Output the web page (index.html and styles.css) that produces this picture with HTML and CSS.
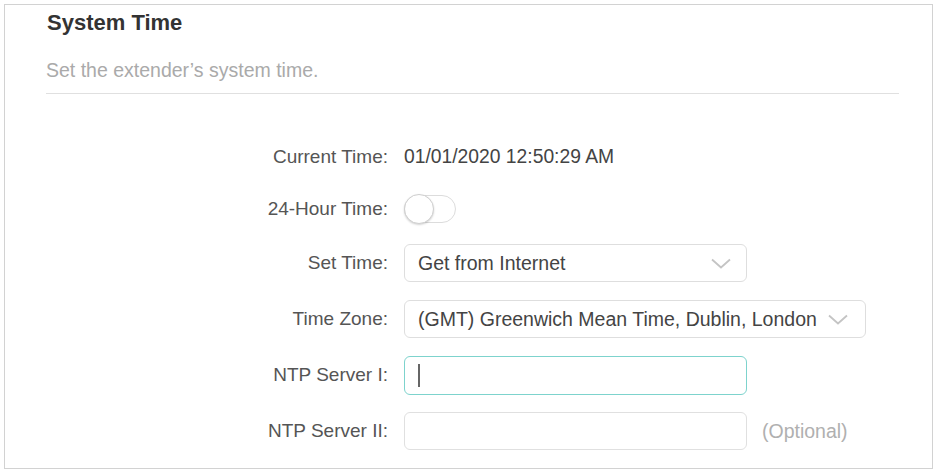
FILE: index.html
```html
<!DOCTYPE html>
<html lang="en">
<head>
<meta charset="utf-8">
<title>System Time</title>
<link rel="stylesheet" href="styles.css">
</head>
<body>
<section class="card">
  <header class="card-head">
    <h1 class="title">System Time</h1>
    <p class="subtitle">Set the extender’s system time.</p>
  </header>
  <div class="form">
    <div class="label row-short">Current Time:</div>
    <div class="field row-short"><span class="value">01/01/2020 12:50:29 AM</span></div>

    <div class="label row-short">24-Hour Time:</div>
    <div class="field row-short"><span class="toggle"><span class="knob"></span></span></div>

    <div class="label">Set Time:</div>
    <div class="field">
      <div class="select select-narrow">
        <span class="select-text">Get from Internet</span>
        <svg class="chev" width="20" height="11" viewBox="0 0 20 11"><path d="M1 1.5 L10 9.5 L19 1.5" fill="none" stroke="#c4c4c4" stroke-width="1.8"/></svg>
      </div>
    </div>

    <div class="label">Time Zone:</div>
    <div class="field">
      <div class="select select-wide">
        <span class="select-text">(GMT) Greenwich Mean Time, Dublin, London</span>
        <svg class="chev" width="20" height="11" viewBox="0 0 20 11"><path d="M1 1.5 L10 9.5 L19 1.5" fill="none" stroke="#c4c4c4" stroke-width="1.8"/></svg>
      </div>
    </div>

    <div class="label">NTP Server I:</div>
    <div class="field">
      <div class="input input-focus"><span class="caret"></span></div>
    </div>

    <div class="label">NTP Server II:</div>
    <div class="field">
      <div class="input"></div>
      <span class="hint">(Optional)</span>
    </div>
  </div>
</section>
</body>
</html>
```
FILE: styles.css
```css
* { box-sizing: border-box; }
html, body { margin: 0; padding: 0; background: #fff; }
body {
  padding: 4px 5px 3px 4px;
  font-family: "Liberation Sans", Arial, sans-serif;
  color: #555;
}
.card {
  border: 1px solid #d2d2d2;
  height: 465px;
  padding: 5px 33px 17px 41px;
  background: #fff;
}
.card-head {
  border-bottom: 1px solid #e0e0e0;
  padding-bottom: 11px;
}
.title {
  margin: 0;
  font-size: 22px;
  line-height: 26px;
  font-weight: bold;
  color: #333;
  padding-left: 1px;
}
.subtitle {
  margin: 22px 0 0 0;
  font-size: 19.5px;
  line-height: 24px;
  color: #aaaaaa;
}
.form {
  display: grid;
  grid-template-columns: 342px 1fr;
  column-gap: 16px;
  row-gap: 18px;
  margin-top: 44px;
  font-size: 19px;
}
.label {
  height: 38px;
  display: flex;
  align-items: center;
  justify-content: flex-end;
  color: #555;
  white-space: nowrap;
}
.field {
  height: 38px;
  display: flex;
  align-items: center;
}
.row-short { height: 35px; }
.label.row-short:first-child, .label.row-short:first-child + .field { padding-top: 2px; }
.value { color: #444; font-size: 19.3px; }
.toggle {
  position: relative;
  display: block;
  width: 52px;
  height: 28px;
  border: 1px solid #dcdcdc;
  border-radius: 14px;
  background: #fff;
}
.knob {
  position: absolute;
  left: -1px;
  top: -2px;
  width: 30px;
  height: 30px;
  border-radius: 50%;
  background: #fff;
  border: 1px solid #cfcfcf;
  box-shadow: 0 1px 2px rgba(0,0,0,0.18);
}
.select {
  height: 38px;
  border: 1px solid #dedede;
  border-radius: 6px;
  display: flex;
  align-items: center;
  padding: 0 15px 0 13px;
  color: #444;
  font-size: 19.5px;
  white-space: nowrap;
}
.select-narrow { width: 343px; justify-content: space-between; }
.select-wide { width: 462px; }
.select-wide .chev { margin-left: 11px; }
.input {
  width: 343px;
  height: 38px;
  border: 1px solid #e0e0e0;
  border-radius: 6px;
  display: flex;
  align-items: center;
  padding-left: 13px;
}
.input-focus {
  height: 39px;
  border-color: #7dd3cd;
}
.caret {
  display: block;
  width: 2px;
  height: 23px;
  background: #666;
}
.hint {
  margin-left: 15px;
  color: #b0b0b0;
  font-size: 19.5px;
}
```
